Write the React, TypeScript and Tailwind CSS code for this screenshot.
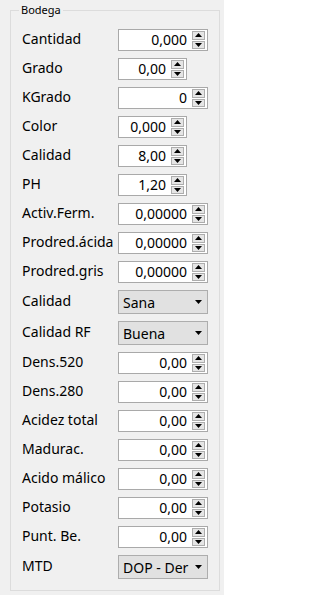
type Row =
  | { label: string; kind: "spin"; value: string; wide: boolean }
  | { label: string; kind: "combo"; value: string };

const rows: Row[] = [
  { label: "Cantidad", kind: "spin", value: "0,000", wide: true },
  { label: "Grado", kind: "spin", value: "0,00", wide: false },
  { label: "KGrado", kind: "spin", value: "0", wide: true },
  { label: "Color", kind: "spin", value: "0,000", wide: false },
  { label: "Calidad", kind: "spin", value: "8,00", wide: false },
  { label: "PH", kind: "spin", value: "1,20", wide: false },
  { label: "Activ.Ferm.", kind: "spin", value: "0,00000", wide: true },
  { label: "Prodred.ácida", kind: "spin", value: "0,00000", wide: true },
  { label: "Prodred.gris", kind: "spin", value: "0,00000", wide: true },
  { label: "Calidad", kind: "combo", value: "Sana" },
  { label: "Calidad RF", kind: "combo", value: "Buena" },
  { label: "Dens.520", kind: "spin", value: "0,00", wide: true },
  { label: "Dens.280", kind: "spin", value: "0,00", wide: true },
  { label: "Acidez total", kind: "spin", value: "0,00", wide: true },
  { label: "Madurac.", kind: "spin", value: "0,00", wide: true },
  { label: "Acido málico", kind: "spin", value: "0,00", wide: true },
  { label: "Potasio", kind: "spin", value: "0,00", wide: true },
  { label: "Punt. Be.", kind: "spin", value: "0,00", wide: true },
  { label: "MTD", kind: "combo", value: "DOP - Der" },
];

function Arrow({ up }: { up: boolean }) {
  return (
    <svg width="7" height="4" viewBox="0 0 7 4" className="block">
      <polygon points={up ? "3.5,0 7,4 0,4" : "0,0 7,0 3.5,4"} fill="#000" />
    </svg>
  );
}

function SpinBox({ value, wide }: { value: string; wide: boolean }) {
  return (
    <div
      className={`flex h-[22px] items-stretch border border-[#a9a9a9] bg-white ${
        wide ? "w-[90px]" : "w-[69px]"
      }`}
    >
      <span className="flex flex-1 items-center justify-end pr-[5px] text-[14px] leading-[18px] text-black">
        {value}
      </span>
      <div className="mr-[2px] flex w-[13px] flex-col gap-px py-[1px]">
        <div className="flex flex-1 items-center justify-center border border-[#adadad] bg-[#e5e5e5]">
          <Arrow up />
        </div>
        <div className="flex flex-1 items-center justify-center border border-[#adadad] bg-[#e5e5e5]">
          <Arrow up={false} />
        </div>
      </div>
    </div>
  );
}

function Combo({ value }: { value: string }) {
  return (
    <div className="flex h-[24px] w-[90px] items-center border border-[#adadad] bg-[#e1e1e1]">
      <span className="flex-1 whitespace-nowrap pl-[4px] pt-[1px] text-[14px] leading-[18px] text-black">
        {value}
      </span>
      <div className="flex w-[17px] shrink-0 justify-center">
        <svg width="7" height="4" viewBox="0 0 7 4" className="block">
          <polygon points="0,0 7,0 3.5,4" fill="#000" />
        </svg>
      </div>
    </div>
  );
}

export default function App() {
  return (
    <div
      className="h-[595px] w-[224px] bg-[#f0f0f0] pt-[2px] pl-[10px]"
      style={{ fontFamily: '"Noto Sans", "Liberation Sans", sans-serif' }}
    >
      <fieldset className="w-[210px] border border-[#dcdcdc] pb-[11px]">
        <legend className="ml-[8px] px-[2px] text-[11px] leading-[16px] text-black">Bodega</legend>
        <div className="flex flex-col gap-[7px] pt-[11px] pl-[11px]">
          {rows.map((r, i) => (
            <div key={i} className="flex items-center">
              <span className="w-[96px] pb-[3px] text-[14px] leading-[18px] text-black">{r.label}</span>
              {r.kind === "spin" ? <SpinBox value={r.value} wide={r.wide} /> : <Combo value={r.value} />}
            </div>
          ))}
        </div>
      </fieldset>
    </div>
  );
}
